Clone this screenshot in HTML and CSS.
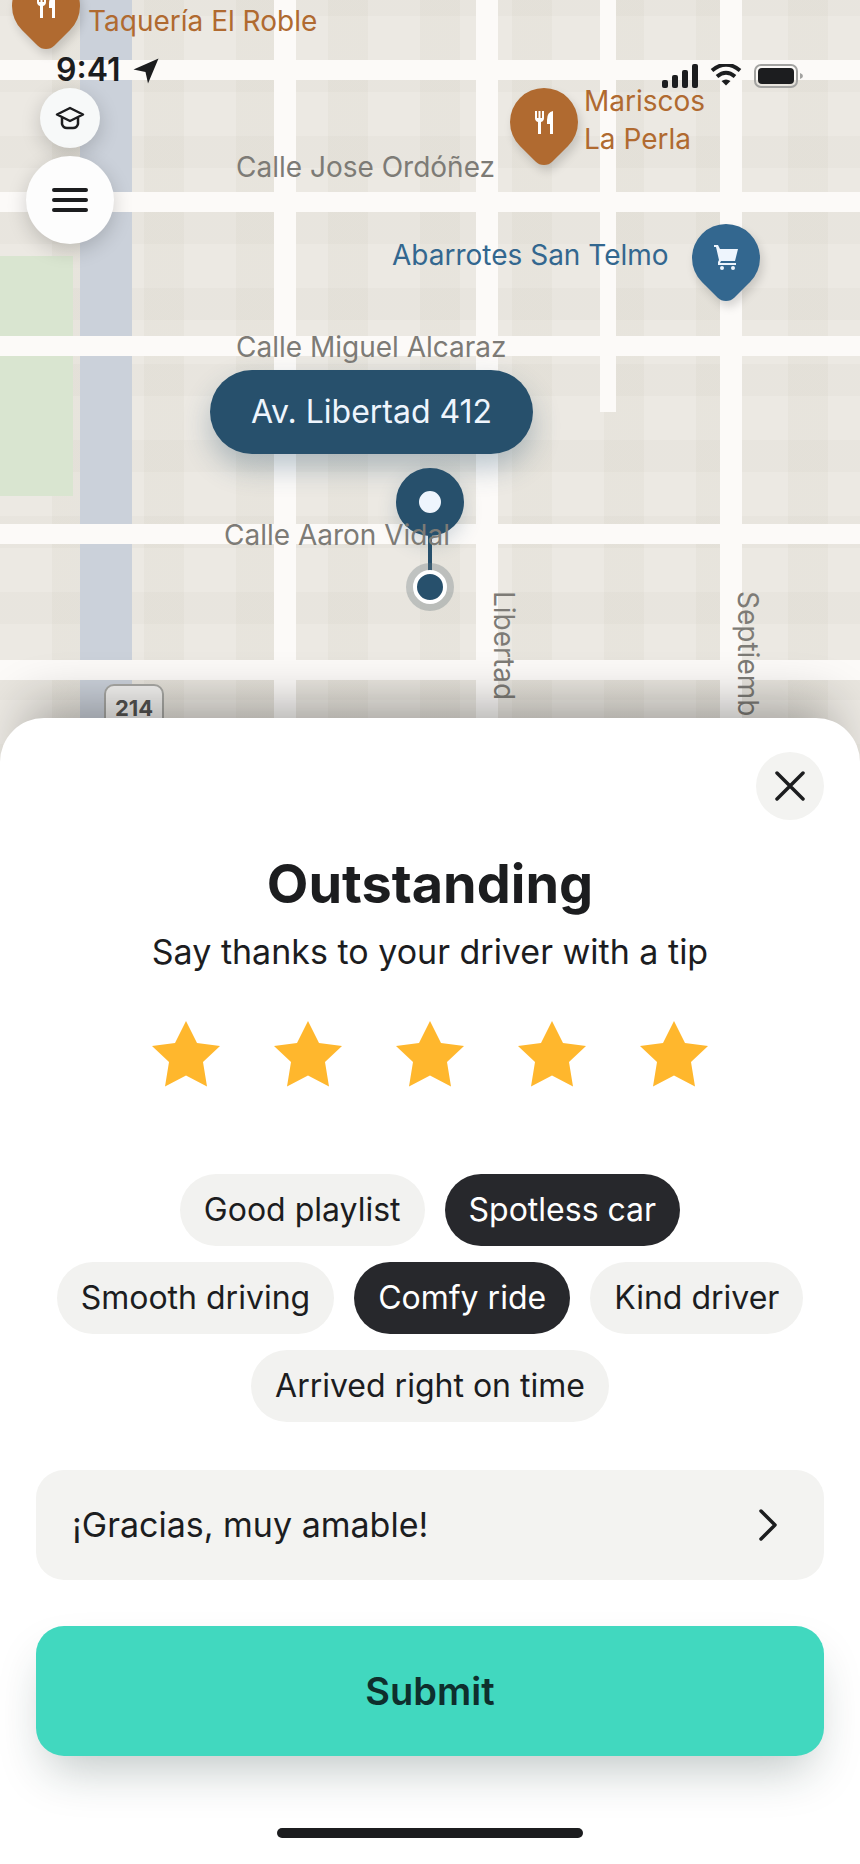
FILE: index.html
```
<!DOCTYPE html>
<html lang="en">
<head>
    <meta charset="UTF-8">
    <meta name="viewport" content="width=device-width, initial-scale=1.0">
    <title>Rate your ride</title>
    <link rel="stylesheet" href="styles.css">
</head>
<body>
    <div class="map">
        <div class="water"></div>
        <div class="park"></div>

        <!-- Roads -->
        <div class="road vertical v1"></div>
        <div class="road vertical v2"></div>
        <div class="road vertical v3"></div>
        <div class="road vertical v4"></div>
        <div class="road h1"></div>
        <div class="road h2"></div>
        <div class="road h3"></div>
        <div class="road h4"></div>
        <div class="road h5"></div>

        <!-- Places -->
        <div class="pin food taqueria">
            <svg width="24" height="28" viewBox="0 0 24 28"><path d="M3 3v7q0 3 3 4v12h3V14q3-1 3-4V3h-2v7H8.500V3h-2v7H5V3zM21 3q-6 1-6 9v4h3v10h3z" fill="#fff"/></svg>
        </div>
        <div class="pin food mariscos">
            <svg width="24" height="28" viewBox="0 0 24 28"><path d="M3 3v7q0 3 3 4v12h3V14q3-1 3-4V3h-2v7H8.500V3h-2v7H5V3zM21 3q-6 1-6 9v4h3v10h3z" fill="#fff"/></svg>
        </div>
        <div class="pin shop abarrotes">
            <svg width="24" height="26" viewBox="0 0 24 26"><path d="M0 0h4l2 4h18l-3 12H7l-1 2h16v2H4V17L5 15 2 2H0z" fill="#eef5fd"/><circle cx="8" cy="23" r="2" fill="#eef5fd"/><circle cx="19" cy="23" r="2" fill="#eef5fd"/></svg>
        </div>

        <div class="address">Av. Libertad 412</div>
        <div class="stem"></div>
        <div class="destination"></div>
        <div class="position"></div>

        <span class="label food-label l-taqueria">Taquería El Roble</span>
        <span class="label food-label l-mariscos">Mariscos<br>La Perla</span>
        <span class="label shop-label l-abarrotes">Abarrotes San Telmo</span>
        <span class="label l-jose">Calle Jose Ordóñez</span>
        <span class="label l-miguel">Calle Miguel Alcaraz</span>
        <span class="label l-aaron">Calle Aaron Vidal</span>
        <span class="label upright l-libertad">Libertad</span>
        <span class="label upright l-septiembre">Septiembre</span>
        <span class="shield">214</span>

        <div class="status-bar">
            <span class="time">9:41</span>
            <svg class="location" width="26" height="26" viewBox="0 0 26 26"><path d="M25.500 0.500L15 25.500 12.500 14 0.500 11.500z" fill="#1c1d1f"/></svg>
            <svg class="signal" width="36" height="24" viewBox="0 0 36 24" fill="#1c1d1f"><rect y="16" width="6" height="8" rx="2"/><rect x="10" y="11" width="6" height="13" rx="2"/><rect x="20" y="6" width="6" height="18" rx="2"/><rect x="30" width="6" height="24" rx="2"/></svg>
            <svg class="wifi" width="32" height="24" viewBox="0 0 32 24"><path d="M2 6.500Q16-5 30 6.500M7 12.500q9-7.500 18 0" fill="none" stroke="#1c1d1f" stroke-width="4"/><path d="M11.500 17q4.500-3 9 0L16 21.500z" fill="#1c1d1f"/></svg>
            <svg class="battery" width="50" height="24" viewBox="0 0 50 24"><rect x="1" y="1" width="42" height="22" rx="6" fill="none" stroke="#a3a3a1" stroke-width="2"/><rect x="4" y="4" width="36" height="16" rx="4" fill="#1c1d1f"/><path d="M46 9q3 1 3 3t-3 3z" fill="#a3a3a1"/></svg>
        </div>

        <div class="map-controls">
            <button class="round small" aria-label="Learn">
                <svg width="30" height="24" viewBox="0 0 30 24" fill="none" stroke="#1c1d1f" stroke-width="2.500" stroke-linejoin="round"><path d="M15 2l13 6.500L15 15 2 8.500zM7 11.500V18q1 4 5 4h6q4 0 5-4v-6.500"/></svg>
            </button>
            <button class="round" aria-label="Menu">
                <svg width="36" height="24" viewBox="0 0 36 24" stroke="#1c1d1f" stroke-width="4" stroke-linecap="round"><path d="M2 2h32M2 12h32M2 22h32"/></svg>
            </button>
        </div>
    </div>

    <div class="sheet">
        <button class="close" aria-label="Close">
            <svg width="30" height="30" viewBox="0 0 30 30" stroke="#1c1d1f" stroke-width="3.500" stroke-linecap="round"><path d="M2 2l26 26M28 2L2 28"/></svg>
        </button>
        <h1>Outstanding</h1>
        <p class="subtitle">Say thanks to your driver with a tip</p>

        <div class="stars">
            <button aria-label="1 star"><svg width="70" height="68" viewBox="0 0 70 68"><path d="M35 1l11 22 23 3-17 16 4 24.500-21-11-21 11L18 42 1 26l23-3z"/></svg></button>
            <button aria-label="2 stars"><svg width="70" height="68" viewBox="0 0 70 68"><path d="M35 1l11 22 23 3-17 16 4 24.500-21-11-21 11L18 42 1 26l23-3z"/></svg></button>
            <button aria-label="3 stars"><svg width="70" height="68" viewBox="0 0 70 68"><path d="M35 1l11 22 23 3-17 16 4 24.500-21-11-21 11L18 42 1 26l23-3z"/></svg></button>
            <button aria-label="4 stars"><svg width="70" height="68" viewBox="0 0 70 68"><path d="M35 1l11 22 23 3-17 16 4 24.500-21-11-21 11L18 42 1 26l23-3z"/></svg></button>
            <button aria-label="5 stars"><svg width="70" height="68" viewBox="0 0 70 68"><path d="M35 1l11 22 23 3-17 16 4 24.500-21-11-21 11L18 42 1 26l23-3z"/></svg></button>
        </div>

        <div class="chips">
            <button class="chip" aria-pressed="false">Good playlist</button>
            <button class="chip selected" aria-pressed="true">Spotless car</button>
            <button class="chip" aria-pressed="false">Smooth driving</button>
            <button class="chip selected" aria-pressed="true">Comfy ride</button>
            <button class="chip" aria-pressed="false">Kind driver</button>
            <button class="chip" aria-pressed="false">Arrived right on time</button>
        </div>

        <button class="note">
            <span>¡Gracias, muy amable!</span>
            <svg width="20" height="32" viewBox="0 0 20 32" fill="none" stroke="#1c1d1f" stroke-width="3.500" stroke-linecap="round" stroke-linejoin="round"><path d="M3 2l14 14L3 30"/></svg>
        </button>

        <button class="submit">Submit</button>
        <div class="home-indicator"></div>
    </div>
</body>
</html>
```
FILE: styles.css
```
* {
    box-sizing: border-box;
}

body {
    margin: 0;
    background: #fff;
    color: #1c1d1f;
    font-family: Inter, "Liberation Sans", sans-serif;
}

button {
    border: 0;
    padding: 0;
    color: inherit;
    font-family: inherit;
    cursor: pointer;
}

svg {
    display: block;
}

/* Map */
.map {
    position: relative;
    height: 762px;
    overflow: hidden;
    background-color: #ece9e3;
    background-image:
        repeating-linear-gradient(90deg, transparent 0 52px, rgba(170, 165, 140, 0.07) 52px 92px),
        repeating-linear-gradient(rgba(170, 165, 150, 0.06) 0 16px, transparent 16px 60px, rgba(170, 165, 150, 0.06) 60px 76px);
}

.water {
    position: absolute;
    top: 0;
    bottom: 0;
    left: 80px;
    width: 52px;
    background: #cbd1da;
}

.park {
    position: absolute;
    top: 256px;
    left: 0;
    width: 73px;
    height: 240px;
    background: #d9e5d0;
}

.road {
    position: absolute;
    left: 0;
    width: 100%;
    height: 20px;
    background: #fcfaf8;
}

.road.vertical {
    top: 0;
    width: 22px;
    height: 100%;
}

.road.v1 { left: 274px; }
.road.v2 { left: 476px; }
.road.v3 { left: 600px; width: 16px; height: 412px; }
.road.v4 { left: 720px; }
.h1 { top: 60px; }
.h2 { top: 192px; }
.h3 { top: 336px; }
.h4 { top: 524px; }
.h5 { top: 660px; }

.pin {
    position: absolute;
    width: 68px;
    height: 68px;
    display: flex;
    align-items: center;
    justify-content: center;
}

.pin::before {
    content: "";
    position: absolute;
    inset: 0;
    border-radius: 50% 50% 12px 50%;
    transform: rotate(45deg);
    box-shadow: 6px 2px 10px rgba(0, 0, 0, 0.15);
}

.pin svg {
    position: relative;
}

.food::before { background: #b06a30; }
.shop::before { background: #33678f; }
.taqueria { top: -28px; left: 12px; }
.mariscos { top: 88px; left: 510px; }
.abarrotes { top: 224px; left: 692px; }

.label {
    position: absolute;
    color: #7d7b76;
    font-size: 28px;
    line-height: 38px;
    white-space: nowrap;
}

.food-label { color: #b06a30; }
.shop-label { color: #33678f; }
.upright { writing-mode: vertical-rl; }
.l-taqueria { top: 2px; left: 88px; }
.l-mariscos { top: 82px; left: 584px; }
.l-abarrotes { top: 236px; left: 392px; }
.l-jose { top: 148px; left: 236px; }
.l-miguel { top: 328px; left: 236px; }
.l-aaron { top: 516px; left: 224px; }
.l-libertad { top: 591px; left: 485px; }
.l-septiembre { top: 591px; left: 729px; }

.shield {
    position: absolute;
    top: 684px;
    left: 104px;
    width: 60px;
    padding: 6px 0;
    border: 2px solid #a9a9a5;
    border-radius: 10px;
    background: #f4f3f1;
    color: #555452;
    font-size: 22px;
    font-weight: 700;
    line-height: 32px;
    text-align: center;
}

.address {
    position: absolute;
    top: 370px;
    left: 210px;
    padding: 0 41px;
    border-radius: 42px;
    background: #27506c;
    color: #eef5fd;
    font-size: 32px;
    line-height: 84px;
    white-space: nowrap;
    box-shadow: 0 14px 28px rgba(39, 80, 108, 0.3);
}

.destination {
    position: absolute;
    top: 468px;
    left: 396px;
    width: 68px;
    height: 68px;
    border: 23px solid #27506c;
    border-radius: 50%;
    background: #eef5fd;
    box-shadow: 0 8px 20px rgba(39, 80, 108, 0.2);
}

.stem {
    position: absolute;
    top: 530px;
    left: 428px;
    width: 4px;
    height: 44px;
    background: #27506c;
}

.position {
    position: absolute;
    top: 570px;
    left: 413px;
    width: 34px;
    height: 34px;
    border: 4px solid #fff;
    border-radius: 50%;
    background: #27506c;
    box-shadow: 0 0 0 7px rgba(100, 115, 120, 0.32);
}

.status-bar {
    position: relative;
    display: flex;
    align-items: flex-end;
    padding: 52px 56px 0;
}

.time {
    font-size: 32px;
    font-weight: 600;
    line-height: 36px;
}

.location {
    margin: 0 auto 4px 12px;
}

.wifi {
    margin: 0 12px;
}

.map-controls {
    position: relative;
    display: flex;
    flex-direction: column;
    align-items: center;
    gap: 8px;
    width: 88px;
    margin-left: 26px;
}

.round {
    width: 88px;
    height: 88px;
    display: flex;
    align-items: center;
    justify-content: center;
    border-radius: 50%;
    background: #fdfdfd;
    box-shadow: 0 6px 20px rgba(0, 0, 0, 0.18);
}

.round.small {
    width: 60px;
    height: 60px;
    background: #f7f9f9;
}

/* Bottom sheet */
.sheet {
    position: relative;
    display: flex;
    flex-direction: column;
    margin-top: -44px;
    padding: 34px 36px 26px;
    border-radius: 44px 44px 0 0;
    background: #fff;
    box-shadow: 0 -40px 52px -28px rgba(0, 0, 0, 0.32);
}

.close {
    align-self: flex-end;
    width: 68px;
    height: 68px;
    display: flex;
    align-items: center;
    justify-content: center;
    border-radius: 50%;
    background: #f3f3f1;
}

h1 {
    margin: 30px 0 0;
    font-size: 54px;
    font-weight: 700;
    line-height: 68px;
    text-align: center;
}

.subtitle {
    margin: 12px 0 0;
    font-size: 34px;
    line-height: 44px;
    text-align: center;
}

.stars {
    display: flex;
    justify-content: center;
    gap: 52px;
    margin-top: 46px;
}

.stars button {
    background: none;
}

.stars path {
    fill: #ffb72d;
}

.chips {
    display: flex;
    flex-wrap: wrap;
    justify-content: center;
    gap: 16px 20px;
    margin-top: 86px;
}

.chip {
    padding: 0 24px;
    border-radius: 36px;
    background: #f2f2f0;
    font-size: 32px;
    line-height: 72px;
}

.chip.selected {
    background: #27282c;
    color: #fff;
}

.note {
    display: flex;
    align-items: center;
    justify-content: space-between;
    margin-top: 48px;
    padding: 0 46px 0 36px;
    border-radius: 28px;
    background: #f3f3f1;
    font-size: 34px;
    line-height: 110px;
}

.submit {
    margin-top: 46px;
    border-radius: 28px;
    background: #41d8bf;
    color: #0e2f2d;
    font-size: 38px;
    font-weight: 600;
    line-height: 130px;
    box-shadow: 0 24px 48px -12px rgba(20, 50, 45, 0.28);
}

.home-indicator {
    align-self: center;
    width: 306px;
    height: 10px;
    margin-top: 72px;
    border-radius: 5px;
    background: #1c1d1f;
}
```
